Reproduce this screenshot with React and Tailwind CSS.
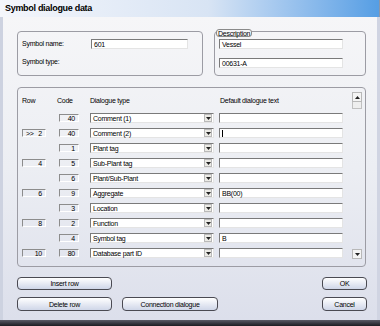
const rows = [
  { row: '', code: '40', type: 'Comment (1)', text: '' },
  { row: '2', mark: true, code: '40', type: 'Comment (2)', text: '', caret: true },
  { row: '', code: '1', type: 'Plant tag', text: '' },
  { row: '4', code: '5', type: 'Sub-Plant tag', text: '' },
  { row: '', code: '6', type: 'Plant/Sub-Plant', text: '' },
  { row: '6', code: '9', type: 'Aggregate', text: 'BB(00)' },
  { row: '', code: '3', type: 'Location', text: '' },
  { row: '8', code: '2', type: 'Function', text: '' },
  { row: '', code: '4', type: 'Symbol tag', text: 'B' },
  { row: '10', code: '80', type: 'Database part ID', text: '' },
]

const sunken = 'border-t border-l border-t-[#7a7a7a] border-l-[#7a7a7a] border-r border-b border-r-[#e4e4e4] border-b-[#e4e4e4]'

function Field({ value, className = '', caret }) {
  return (
    <div className={`h-[10px] bg-white ${sunken} flex items-center pl-[2px] leading-none ${className}`}>
      {caret && <span className="w-px h-[7px] bg-black" />}
      {value}
    </div>
  )
}

function StaticBox({ children, className = '' }) {
  return (
    <div className={`h-[8px] mt-[1px] flex items-center justify-end pr-[3px] leading-none border-t border-l border-[#8c8c8c] border-r-white border-b-white border-r border-b ${className}`}>
      {children}
    </div>
  )
}

function Combo({ value }) {
  return (
    <div className={`w-[124px] h-[10px] bg-white ${sunken} flex items-center pl-[2px] leading-none`}>
      <span className="flex-1">{value}</span>
      <span className="w-[8px] h-[8px] mr-[1px] bg-[#ecebe6] border border-[#b9b9b9] flex items-center justify-center">
        <svg width="5" height="3" viewBox="0 0 5 3"><path d="M0 0h5L2.5 3z" fill="#222" /></svg>
      </span>
    </div>
  )
}

function Btn({ children, className = '' }) {
  return (
    <div className={`flex items-center justify-center rounded-[4px] border border-[#4a4a52] bg-gradient-to-b from-white to-[#cfd6e8] leading-none ${className}`}>
      {children}
    </div>
  )
}

function ScrollBtn({ up }) {
  return (
    <div className="w-[10px] h-[10px] bg-[#f4f4f4] border border-[#b8b8b8] flex items-center justify-center">
      <svg width="5" height="3" viewBox="0 0 5 3">
        <path d={up ? 'M0 3h5L2.5 0z' : 'M0 0h5L2.5 3z'} fill="#222" />
      </svg>
    </div>
  )
}

export default function App() {
  return (
    <div className="w-[380px] h-[326px] flex flex-col overflow-hidden text-[7px] text-black tracking-[-0.25px]" style={{ fontFamily: '"Liberation Sans", Arial, sans-serif' }}>
      <div className="h-[17px] shrink-0 flex items-center pl-[5px] bg-gradient-to-r from-[#f4f6fb] via-[#d8e4f4] via-55% to-[#559ee4] border-r border-[#8a96aa]">
        <span className="font-bold text-[9px] tracking-[-0.3px]">Symbol dialogue data</span>
      </div>

      <div className="flex-1 flex flex-col border-l-[3px] border-l-[#cdd2e0] border-r-[3px] border-r-[#d0d4e2] bg-gradient-to-b from-[#f6f6f8] via-[#eceef3] to-[#dcdfeb] pl-[14px] pr-[11px]">
        <div className="flex mt-[14px] h-[45px] gap-[11px]">
          <div className="w-[186px] rounded-[4px] border border-[#9c9ca4] pl-[4px] pt-[7px]">
            <div className="flex items-center h-[10px]">
              <span className="w-[69px]">Symbol name:</span>
              <Field value="601" className="w-[97px]" />
            </div>
            <div className="mt-[8px]">Symbol type:</div>
          </div>
          <div className="flex-1 relative rounded-[4px] border border-[#9c9ca4] pl-[4px] pt-[7px]">
            <span className="absolute left-[1px] -top-[3px] px-[1px] h-[8px] leading-[7px] rounded-[3px] border border-[#8a8a8a] bg-[#f6f6f8]">Description</span>
            <Field value="Vessel" className="w-[124px]" />
            <Field value="00631-A" className="w-[124px] mt-[9px]" />
          </div>
        </div>

        <div className="mt-[11px] h-[180px] rounded-[4px] border border-[#9c9ca4] flex">
          <div className="w-[334px] pl-[4px]">
            <div className="flex h-[18px] items-end">
              <span className="w-[35px]">Row</span>
              <span className="w-[33px]">Code</span>
              <span className="w-[130px]">Dialogue type</span>
              <span>Default dialogue text</span>
            </div>
            <div className="mt-[7px] flex flex-col gap-[5px]">
              {rows.map((r, i) => (
                <div key={i} className="flex h-[10px]">
                  <div className="w-[24px]">
                    {r.row && (
                      <StaticBox className="w-[24px]">
                        {r.mark && <span className="mr-auto pl-[3px]">&gt;&gt;</span>}
                        {r.row}
                      </StaticBox>
                    )}
                  </div>
                  <StaticBox className="w-[20px] ml-[13px]">{r.code}</StaticBox>
                  <div className="ml-[11px]"><Combo value={r.type} /></div>
                  <Field value={r.text} caret={r.caret} className="w-[124px] ml-[5px]" />
                </div>
              ))}
            </div>
          </div>
          <div className="flex flex-col pt-[4px] pb-[7px]">
            <ScrollBtn up />
            <div className="w-[10px] h-[7px] bg-[#eeeeee] border border-[#c0c0c0] border-t-0" />
            <div className="flex-1" />
            <ScrollBtn />
          </div>
        </div>

        <div className="mt-[10px] flex justify-between">
          <Btn className="w-[95px] h-[13px]">Insert row</Btn>
          <Btn className="w-[45px] h-[13px] mr-[-1px]">OK</Btn>
        </div>
        <div className="mt-[7px] flex">
          <Btn className="w-[95px] h-[14px]">Delete row</Btn>
          <Btn className="w-[96px] h-[14px] ml-[10px]">Connection dialogue</Btn>
          <Btn className="w-[45px] h-[14px] ml-auto mr-[-1px]">Cancel</Btn>
        </div>
      </div>

      <div className="h-[6px] shrink-0 bg-gradient-to-b from-[#5a5a66] to-[#1c1c22]" />
    </div>
  )
}
